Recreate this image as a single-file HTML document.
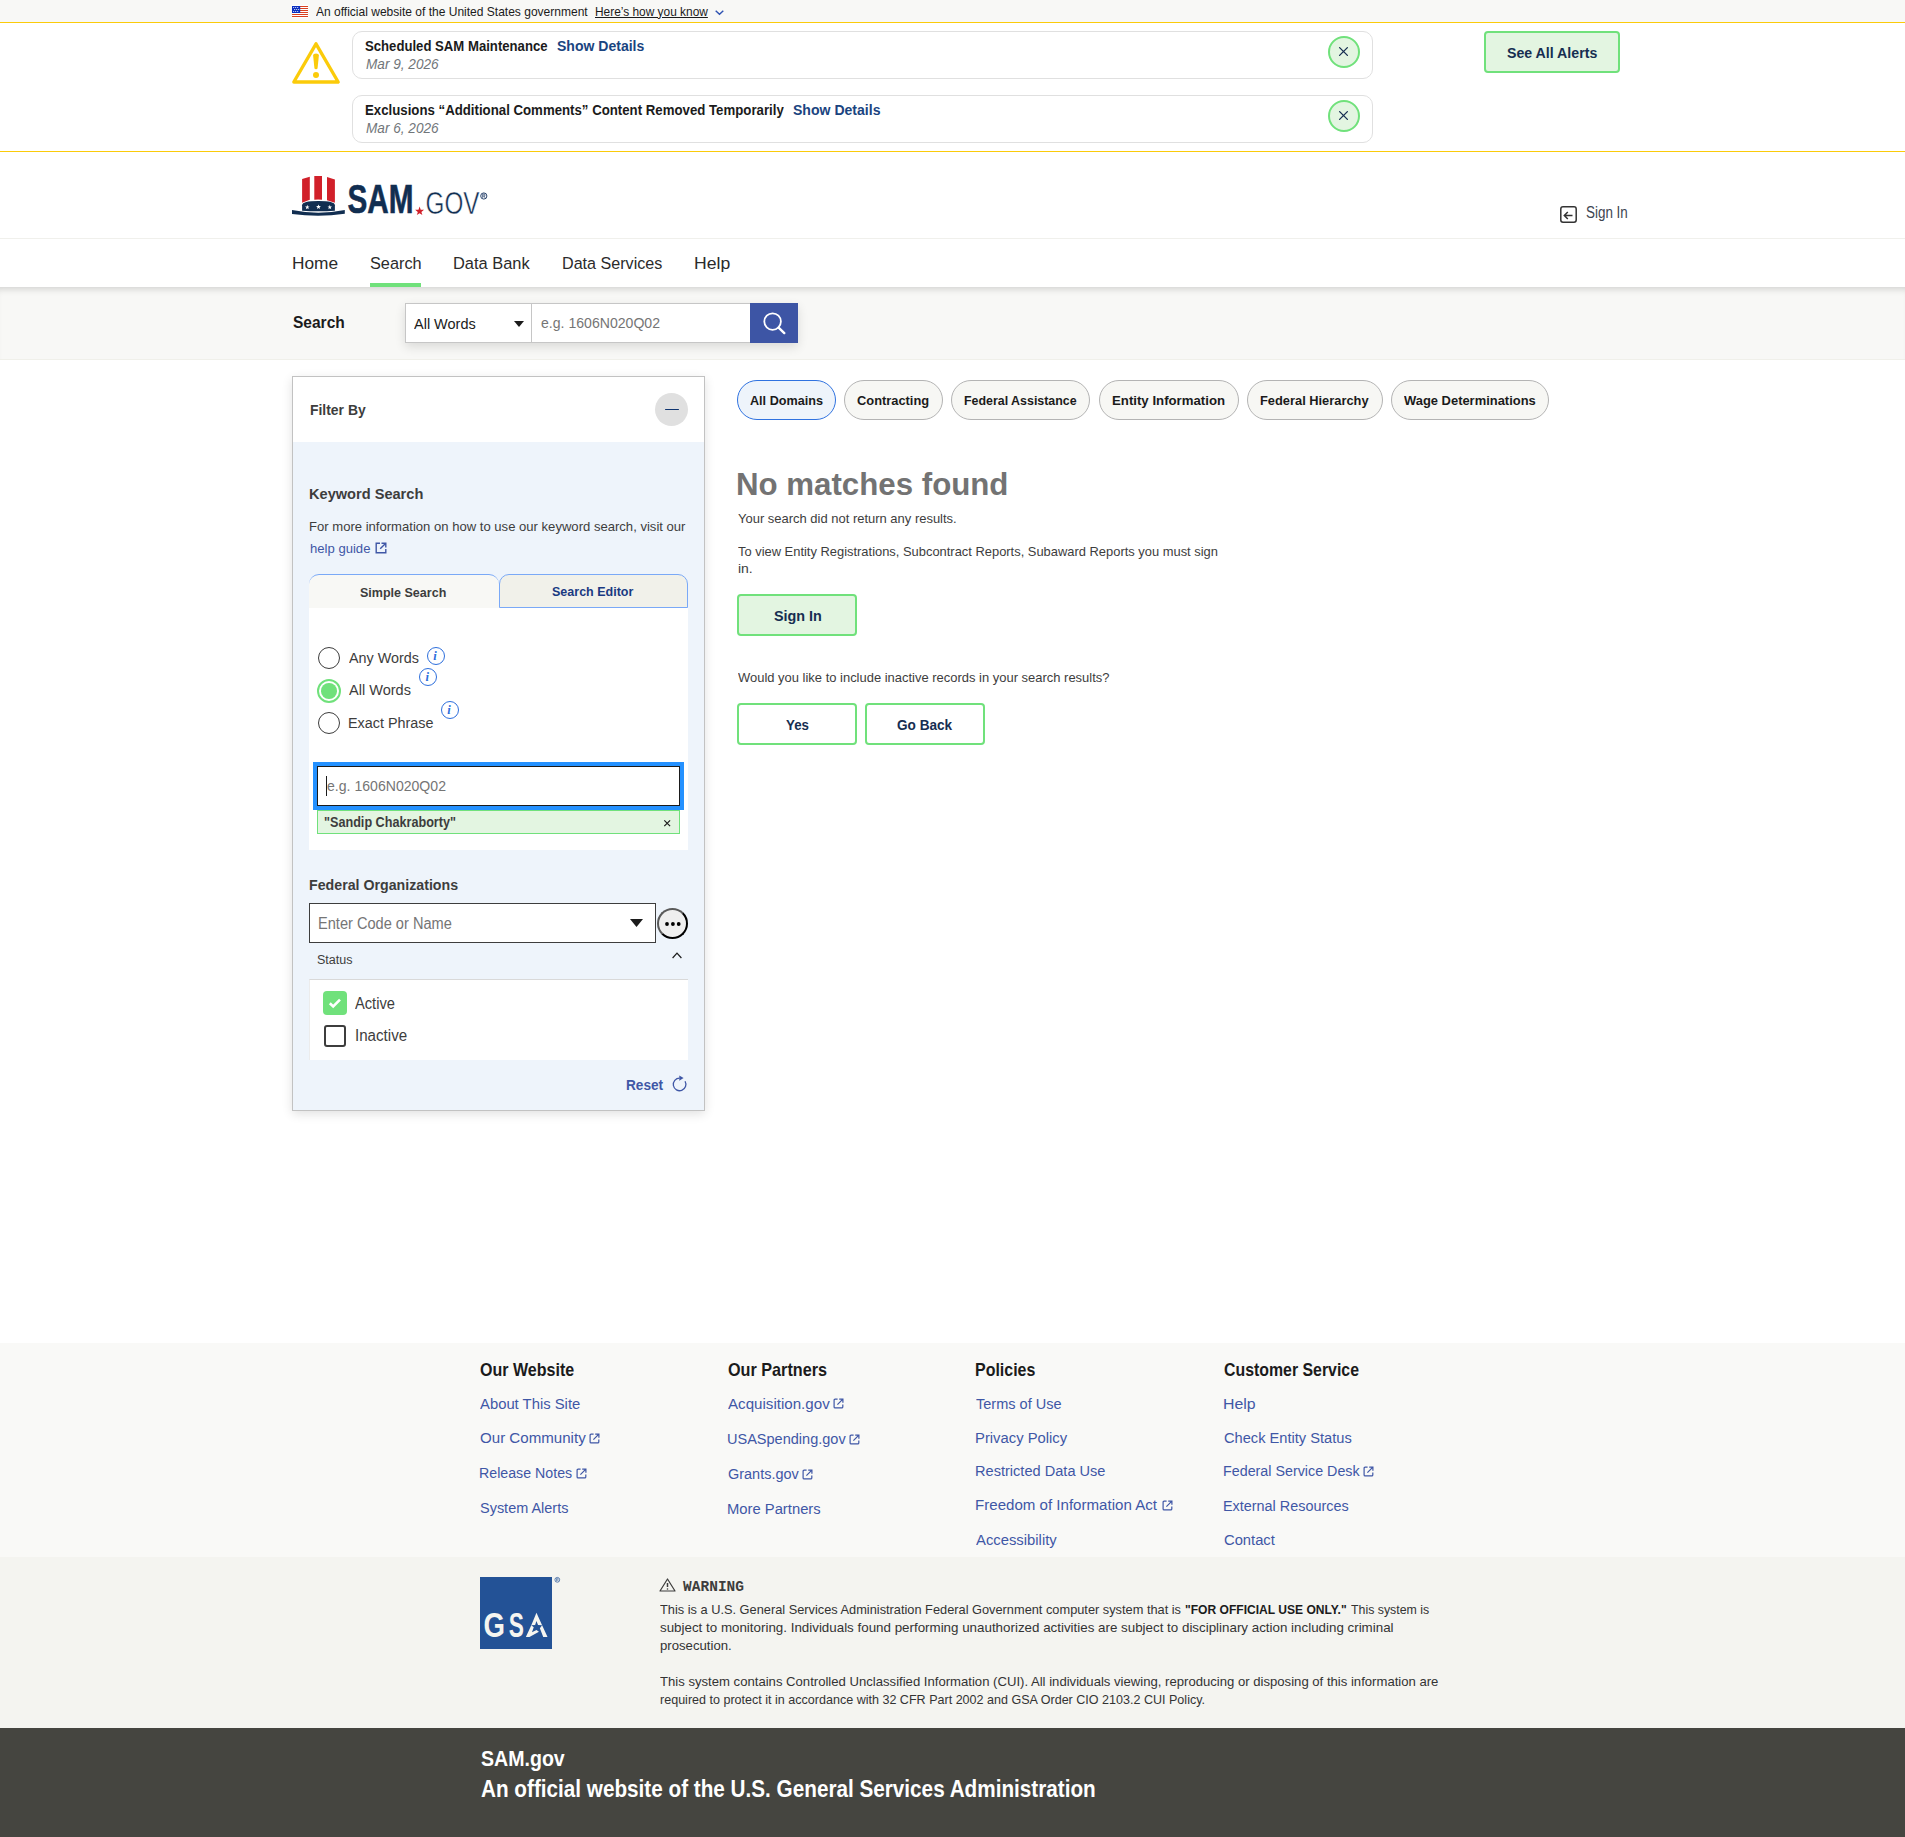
<!DOCTYPE html><html lang="en"><head><meta charset="utf-8"><title>SAM.gov | Search</title>
<style>
html,body{margin:0;padding:0;overflow:hidden;}
body{width:1905px;height:1837px;position:relative;overflow:hidden;background:#fff;font-family:"Liberation Sans",sans-serif;color:#1b1b1b;}
.a{position:absolute;box-sizing:border-box;}
.t{position:absolute;white-space:nowrap;transform-origin:0 0;}
.u{text-decoration:underline;}
svg{position:absolute;overflow:visible;}
</style></head><body>
<div class="a" style="left:0;top:0;width:1905px;height:22px;background:#f8f8f6"></div><div class="a" style="left:0;top:22px;width:1905px;height:1px;background:#fbcb0a"></div><svg style="left:292px;top:5px" width="16" height="13" viewBox="0 0 16 13">
<rect width="16" height="13" fill="#fff"/>
<g fill="#d9401f"><rect y="1" width="16" height="1"/><rect y="3" width="16" height="1"/><rect y="5" width="16" height="1"/><rect y="7" width="16" height="1"/><rect y="9" width="16" height="1"/><rect y="11" width="16" height="1"/></g>
<rect y="1" width="8.2" height="7" fill="#0a2fc0"/>
<g fill="#fff"><circle cx="1.7" cy="2.5" r=".55"/><circle cx="3.7" cy="2.5" r=".55"/><circle cx="5.7" cy="2.5" r=".55"/><circle cx="2.7" cy="4.5" r=".55"/><circle cx="4.7" cy="4.5" r=".55"/><circle cx="6.7" cy="4.5" r=".55"/><circle cx="1.7" cy="6.5" r=".55"/><circle cx="3.7" cy="6.5" r=".55"/><circle cx="5.7" cy="6.5" r=".55"/></g>
</svg><div class="t" style="left:316.00px;top:4.60px;font-size:13px;line-height:13px;color:#1b1b1b;transform:scaleX(0.9244);">An official website of the United States government</div><div class="t" style="left:595.48px;top:4.60px;font-size:13px;line-height:13px;color:#1b1b1b;transform:scaleX(0.9151);text-decoration:underline;">Here&#8217;s how you know</div><svg style="left:715px;top:10px" width="9" height="5" viewBox="0 0 9 5"><path d="M0.7 0.7 L4.5 4.2 L8.3 0.7" fill="none" stroke="#2e52b2" stroke-width="1.4"/></svg><div class="a" style="left:0;top:151px;width:1905px;height:1px;background:#fbcb0a"></div><svg style="left:292px;top:42px" width="48" height="42" viewBox="0 0 48 42">
<path d="M24 1.8 L46.2 40 L1.8 40 Z" fill="none" stroke="#fbcb0a" stroke-width="3.3" stroke-linejoin="round"/>
<path d="M21.1 13.2 Q21.1 11.6 24 11.6 Q26.9 11.6 26.9 13.2 L25.6 26 Q25.4 27.2 24 27.2 Q22.6 27.2 22.4 26 Z" fill="#fbcb0a"/>
<circle cx="24" cy="32.9" r="3" fill="#fbcb0a"/>
</svg><div class="a" style="left:352px;top:31px;width:1021px;height:48px;border:1px solid #e0e0e0;border-radius:10px;background:#fff"></div><div class="t" style="left:365.00px;top:38.75px;font-size:14.5px;line-height:14.5px;font-weight:700;color:#1b1b1b;transform:scaleX(0.9063);">Scheduled SAM Maintenance</div><div class="t" style="left:556.60px;top:38.75px;font-size:14.5px;line-height:14.5px;font-weight:700;color:#1a4480;transform:scaleX(0.9670);">Show Details</div><div class="t" style="left:365.50px;top:56.75px;font-size:14.5px;line-height:14.5px;font-style:italic;color:#71767a;transform:scaleX(0.9385);">Mar 9, 2026</div><div class="a" style="left:1328px;top:36px;width:32px;height:32px;border:2px solid #70e17b;border-radius:50%;background:#e3f5e1"></div><svg style="left:1339px;top:47.4px" width="9" height="9" viewBox="0 0 9 9"><path d="M.6 .6L8.4 8.4M8.4 .6L.6 8.4" stroke="#162e51" stroke-width="1.3" stroke-linecap="round"/></svg><div class="a" style="left:352px;top:95px;width:1021px;height:48px;border:1px solid #e0e0e0;border-radius:10px;background:#fff"></div><div class="t" style="left:365.00px;top:102.75px;font-size:14.5px;line-height:14.5px;font-weight:700;color:#1b1b1b;transform:scaleX(0.9124);">Exclusions &#8220;Additional Comments&#8221; Content Removed Temporarily</div><div class="t" style="left:793.00px;top:102.75px;font-size:14.5px;line-height:14.5px;font-weight:700;color:#1a4480;transform:scaleX(0.9692);">Show Details</div><div class="t" style="left:365.50px;top:120.75px;font-size:14.5px;line-height:14.5px;font-style:italic;color:#71767a;transform:scaleX(0.9385);">Mar 6, 2026</div><div class="a" style="left:1328px;top:100px;width:32px;height:32px;border:2px solid #70e17b;border-radius:50%;background:#e3f5e1"></div><svg style="left:1339px;top:111.4px" width="9" height="9" viewBox="0 0 9 9"><path d="M.6 .6L8.4 8.4M8.4 .6L.6 8.4" stroke="#162e51" stroke-width="1.3" stroke-linecap="round"/></svg><div class="a" style="left:1484px;top:31px;width:136px;height:42px;border:2px solid #70e17b;border-radius:4px;background:#e3f5e1"></div><div class="t" style="left:1507.00px;top:45.00px;font-size:15px;line-height:15px;font-weight:700;color:#162e51;transform:scaleX(0.9443);">See All Alerts</div><svg style="left:292px;top:176px" width="196" height="41" viewBox="0 0 196 41">
<path d="M10.1 3.1 L17.8 0.7 L17.8 23.7 L10.1 26.7 Z" fill="#d1202a"/>
<path d="M22.3 0 L30 0 L30 23.7 Q26.15 23.2 22.3 23.7 Z" fill="#d1202a"/>
<path d="M35 1.0 L42.9 3.4 L42.9 26.7 L35 24.2 Z" fill="#d1202a"/>
<path d="M10.1 34.7 L10.1 29.3 Q10.1 25.1 26.5 25.1 Q42.9 25.1 42.9 29.3 L42.9 34.7 Q26.5 35.8 10.1 34.7 Z" fill="#112e51"/>
<path fill="#fff" d="M15.30 28.80L15.89 30.38L17.58 30.46L16.26 31.51L16.71 33.14L15.30 32.21L13.89 33.14L14.34 31.51L13.02 30.46L14.71 30.38ZM26.50 28.40L27.14 30.12L28.97 30.20L27.54 31.34L28.03 33.10L26.50 32.09L24.97 33.10L25.46 31.34L24.03 30.20L25.86 30.12ZM37.80 28.80L38.39 30.38L40.08 30.46L38.76 31.51L39.21 33.14L37.80 32.21L36.39 33.14L36.84 31.51L35.52 30.46L37.21 30.38Z"/>
<path d="M0 34.1 Q26.4 39.2 52.8 34.1 L52.8 37.8 Q26.4 41.5 0 37.9 Z" fill="#112e51"/>
<text x="55.5" y="37" font-family="Liberation Sans" font-weight="700" font-size="40" textLength="66" stroke="#112e51" stroke-width="0.6" lengthAdjust="spacingAndGlyphs" fill="#112e51">SAM</text>
<path d="M127.60 30.60L128.71 33.78L132.07 33.85L129.39 35.88L130.36 39.10L127.60 37.18L124.84 39.10L125.81 35.88L123.13 33.85L126.49 33.78Z" fill="#d1202a"/>
<text x="133.5" y="37.6" font-family="Liberation Sans" font-weight="400" font-size="31" textLength="54" lengthAdjust="spacingAndGlyphs" fill="#112e51" stroke="#fff" stroke-width="0.5" paint-order="normal">GOV</text>
<circle cx="191.8" cy="20" r="3.1" fill="none" stroke="#15325e" stroke-width=".9"/>
<path d="M190.7 21.9V18.1H192Q193.1 18.1 193.1 19.1Q193.1 20 192 20H190.7M192 20L193.1 21.9" fill="none" stroke="#15325e" stroke-width=".7"/>
</svg><svg style="left:1560px;top:206px" width="17" height="17" viewBox="0 0 17 17"><rect x="0.8" y="0.8" width="15.4" height="15.4" rx="2.2" fill="none" stroke="#333" stroke-width="1.5"/><path d="M12.5 9.5H4.5M7.8 6L4.3 9.5L7.8 13" fill="none" stroke="#333" stroke-width="1.5"/></svg><div class="t" style="left:1586.00px;top:204.50px;font-size:16px;line-height:16px;color:#3d4551;transform:scaleX(0.8382);">Sign In</div><div class="a" style="left:0;top:238px;width:1905px;height:1px;background:#f0f0ec"></div><div class="t" style="left:291.60px;top:254.90px;font-size:17.4px;line-height:17.4px;color:#2b2b2b;transform:scaleX(0.9951);">Home</div><div class="t" style="left:370.00px;top:254.90px;font-size:17.4px;line-height:17.4px;color:#2b2b2b;transform:scaleX(0.9370);">Search</div><div class="t" style="left:452.56px;top:254.90px;font-size:17.4px;line-height:17.4px;color:#2b2b2b;transform:scaleX(0.9440);">Data Bank</div><div class="t" style="left:561.97px;top:254.90px;font-size:17.4px;line-height:17.4px;color:#2b2b2b;transform:scaleX(0.9270);">Data Services</div><div class="t" style="left:694.49px;top:254.90px;font-size:17.4px;line-height:17.4px;color:#2b2b2b;transform:scaleX(1.0119);">Help</div><div class="a" style="left:370px;top:283px;width:51px;height:4px;background:#70e17b"></div><div class="a" style="left:0;top:287px;width:1905px;height:73px;background:#f8f8f6;border-bottom:1px solid #f0f0ea;box-shadow:inset 0 7px 7px -5px rgba(0,0,0,0.16)"></div><div class="t" style="left:292.60px;top:314.85px;font-size:16.7px;line-height:16.7px;font-weight:700;color:#1b1b1b;transform:scaleX(0.9303);">Search</div><div class="a" style="left:405px;top:303px;width:393px;height:40px;box-shadow:0 4px 10px rgba(0,0,0,0.12)"></div><div class="a" style="left:405px;top:303px;width:127px;height:40px;border:1px solid #c6c6c6;background:#fff"></div><div class="t" style="left:414.30px;top:315.60px;font-size:15.4px;line-height:15.4px;color:#1b1b1b;transform:scaleX(0.9412);">All Words</div><svg style="left:514px;top:321px" width="10" height="6" viewBox="0 0 10 6"><path d="M0 0H10L5 6Z" fill="#1b1b1b"/></svg><div class="a" style="left:532px;top:303px;width:219px;height:40px;border:1px solid #c6c6c6;border-left:none;background:#fff"></div><div class="t" style="left:540.60px;top:315.40px;font-size:15.4px;line-height:15.4px;color:#757575;transform:scaleX(0.9150);">e.g. 1606N020Q02</div><div class="a" style="left:750px;top:303px;width:48px;height:40px;background:#3d55a5"></div><svg style="left:762px;top:311px" width="24" height="24" viewBox="0 0 24 24"><circle cx="10.6" cy="10.6" r="8.3" fill="none" stroke="#fff" stroke-width="1.8"/><path d="M16.6 16.6L22.3 22.1" stroke="#fff" stroke-width="2.4" stroke-linecap="round"/></svg><div class="a" style="left:292px;top:376px;width:413px;height:735px;border:1px solid #c2c2c2;background:#fff;box-shadow:0 3px 10px rgba(0,0,0,0.12)"></div><div class="a" style="left:293px;top:442px;width:411px;height:668px;background:#eef4fb"></div><div class="t" style="left:309.70px;top:403.45px;font-size:14.5px;line-height:14.5px;font-weight:700;color:#3d3d3d;transform:scaleX(0.9594);">Filter By</div><div class="a" style="left:655px;top:393px;width:33px;height:33px;border-radius:50%;background:#e0e0e0"></div><div class="a" style="left:665px;top:408.7px;width:14px;height:1.4px;border-radius:1px;background:#0f3570"></div><div class="t" style="left:308.55px;top:485.50px;font-size:15.4px;line-height:15.4px;font-weight:700;color:#3d3d3d;transform:scaleX(0.9479);">Keyword Search</div><div class="t" style="left:308.52px;top:520.20px;font-size:13.4px;line-height:13.4px;color:#3d3d3d;transform:scaleX(0.9765);">For more information on how to use our keyword search, visit our</div><div class="t" style="left:309.50px;top:542.10px;font-size:13.4px;line-height:13.4px;color:#3f57a6;transform:scaleX(0.9779);">help guide</div><svg style="left:375px;top:542px" width="12" height="12" viewBox="0 0 12 12"><path d="M5 1.2H1.2V10.8H10.8V7" fill="none" stroke="#3f57a6" stroke-width="1.4"/><path d="M6.5 1.2H10.8V5.5M10.8 1.2L5.2 6.8" fill="none" stroke="#3f57a6" stroke-width="1.4"/></svg><div class="a" style="left:309px;top:608px;width:379px;height:242px;background:#fff"></div><div class="a" style="left:309px;top:574px;width:190px;height:34px;background:#f8f8f5;border-top:1px solid #7aa9f7;border-radius:10px 10px 0 0"></div><div class="a" style="left:499px;top:574px;width:189px;height:34px;background:#f1f1ea;border:1px solid #7aa9f7;border-radius:10px 10px 0 0"></div><div class="t" style="left:360.30px;top:585.70px;font-size:13.6px;line-height:13.6px;font-weight:700;color:#3d3d3d;transform:scaleX(0.9209);">Simple Search</div><div class="t" style="left:552.00px;top:584.70px;font-size:13.6px;line-height:13.6px;font-weight:700;color:#1a3a82;transform:scaleX(0.9204);">Search Editor</div><div class="a" style="left:318px;top:647px;width:22px;height:22px;border-radius:50%;border:1.5px solid #3d3d3d;background:#fff"></div><div class="t" style="left:349.20px;top:649.60px;font-size:15.4px;line-height:15.4px;color:#3d3d3d;transform:scaleX(0.9324);">Any Words</div><div class="a" style="left:427px;top:647px;width:18px;height:18px;border-radius:50%;border:1.3px solid #2e6fdc"></div><div class="t" style="left:433.2px;top:649px;font-size:12.5px;line-height:14px;font-style:italic;font-weight:700;font-family:'Liberation Serif',serif;color:#2e6fdc">i</div><div class="a" style="left:317px;top:679px;width:24px;height:24px;border-radius:50%;border:2.2px solid #70e17b;background:#fff"></div><div class="a" style="left:321.2px;top:683.2px;width:15.6px;height:15.6px;border-radius:50%;background:#70e17b"></div><div class="t" style="left:349.20px;top:682.40px;font-size:15.4px;line-height:15.4px;color:#3d3d3d;transform:scaleX(0.9442);">All Words</div><div class="a" style="left:419.2px;top:668px;width:18px;height:18px;border-radius:50%;border:1.3px solid #2e6fdc"></div><div class="t" style="left:425.4px;top:670px;font-size:12.5px;line-height:14px;font-style:italic;font-weight:700;font-family:'Liberation Serif',serif;color:#2e6fdc">i</div><div class="a" style="left:318px;top:711.6px;width:22px;height:22px;border-radius:50%;border:1.5px solid #3d3d3d;background:#fff"></div><div class="t" style="left:348.27px;top:715.40px;font-size:15.4px;line-height:15.4px;color:#3d3d3d;transform:scaleX(0.9336);">Exact Phrase</div><div class="a" style="left:441px;top:701px;width:18px;height:18px;border-radius:50%;border:1.3px solid #2e6fdc"></div><div class="t" style="left:447.2px;top:703px;font-size:12.5px;line-height:14px;font-style:italic;font-weight:700;font-family:'Liberation Serif',serif;color:#2e6fdc">i</div><div class="a" style="left:313px;top:762px;width:371px;height:48px;border:4px solid #2491ff;"></div><div class="a" style="left:317px;top:766px;width:363px;height:40px;border:1px solid #1b1b1b;background:#fff"></div><div class="a" style="left:326px;top:776px;width:1.3px;height:20px;background:#1b1b1b"></div><div class="t" style="left:327.00px;top:778.35px;font-size:15.3px;line-height:15.3px;color:#757575;transform:scaleX(0.9203);">e.g. 1606N020Q02</div><div class="a" style="left:317px;top:810px;width:363px;height:24px;border:1px solid #70e17b;background:#e3f5e1"></div><div class="t" style="left:324.00px;top:815.60px;font-size:13.8px;line-height:13.8px;font-weight:700;color:#3d3d3d;transform:scaleX(0.9155);">&quot;Sandip Chakraborty&quot;</div><svg style="left:663.8px;top:819.7px" width="6.4" height="6.4" viewBox="0 0 6.4 6.4"><path d="M.3 .3L6.1 6.1M6.1 .3L.3 6.1" stroke="#1b1b1b" stroke-width="1.2"/></svg><div class="t" style="left:309.40px;top:877.75px;font-size:14.5px;line-height:14.5px;font-weight:700;color:#3d3d3d;transform:scaleX(0.9788);">Federal Organizations</div><div class="a" style="left:309px;top:903px;width:347px;height:40px;border:1px solid #3d3d3d;background:#fff"></div><div class="t" style="left:317.59px;top:915.90px;font-size:16px;line-height:16px;color:#757575;transform:scaleX(0.9120);">Enter Code or Name</div><svg style="left:629.5px;top:919px" width="13" height="8" viewBox="0 0 13 8"><path d="M0 0H13L6.5 8Z" fill="#1b1b1b"/></svg><div class="a" style="left:656.5px;top:907.5px;width:31px;height:31px;border-radius:50%;border:2px solid;border-color:#5a5a5a #000 #000 #5a5a5a;background:#efefef"></div><svg style="left:665.4px;top:922.3px" width="16" height="4" viewBox="0 0 16 4"><circle cx="2" cy="2" r="1.9" fill="#000"/><circle cx="7.9" cy="2" r="1.9" fill="#000"/><circle cx="13.7" cy="2" r="1.9" fill="#000"/></svg><div class="t" style="left:317.40px;top:952.65px;font-size:13.7px;line-height:13.7px;color:#3d3d3d;transform:scaleX(0.9163);">Status</div><svg style="left:671.5px;top:952px" width="10" height="7" viewBox="0 0 10 7"><path d="M.6 6L5 1.2L9.4 6" fill="none" stroke="#1b1b1b" stroke-width="1.2"/></svg><div class="a" style="left:309px;top:979px;width:379px;height:81px;background:#fff;border-top:1.5px solid #d9d9d9;border-left:1px solid #ececec"></div><div class="a" style="left:323px;top:991px;width:24px;height:24px;border-radius:4px;background:#70e17b"></div><svg style="left:328px;top:997px" width="14" height="12" viewBox="0 0 14 12"><path d="M1.8 6.2L5.2 9.4L12 2.6" fill="none" stroke="#fff" stroke-width="2.6"/></svg><div class="t" style="left:355.10px;top:995.50px;font-size:16px;line-height:16px;color:#3d3d3d;transform:scaleX(0.9159);">Active</div><div class="a" style="left:324px;top:1025px;width:22px;height:22px;border-radius:3px;border:2px solid #3d3d3d;background:#fff"></div><div class="t" style="left:354.75px;top:1027.80px;font-size:16px;line-height:16px;color:#3d3d3d;transform:scaleX(0.9458);">Inactive</div><div class="t" style="left:625.50px;top:1078.45px;font-size:14.5px;line-height:14.5px;font-weight:700;color:#3f57a6;transform:scaleX(0.9404);">Reset</div><svg style="left:672px;top:1076px" width="16" height="16" viewBox="0 0 16 16"><path d="M13.06 5.25A6.3 6.3 0 1 1 7.6 2.1" fill="none" stroke="#3f57a6" stroke-width="1.3"/><path d="M7.3 -0.6L11.6 2.1L7.3 4.8Z" fill="#3f57a6"/></svg><div class="a" style="left:737px;top:380px;width:99px;height:40px;border:1.5px solid #2f72e0;border-radius:20px;background:#eef4fb"></div><div class="t" style="left:750.20px;top:393.70px;font-size:13.2px;line-height:13.2px;font-weight:700;color:#1b1b1b;transform:scaleX(0.9569);">All Domains</div><div class="a" style="left:844px;top:380px;width:98.5px;height:40px;border:1px solid #b4b4b4;border-radius:20px;background:#f7f7f4"></div><div class="t" style="left:857.20px;top:393.70px;font-size:13.2px;line-height:13.2px;font-weight:700;color:#1b1b1b;transform:scaleX(0.9751);">Contracting</div><div class="a" style="left:951.2px;top:380px;width:139.20000000000005px;height:40px;border:1px solid #b4b4b4;border-radius:20px;background:#f7f7f4"></div><div class="t" style="left:964.40px;top:393.70px;font-size:13.2px;line-height:13.2px;font-weight:700;color:#1b1b1b;transform:scaleX(0.9409);">Federal Assistance</div><div class="a" style="left:1099.2px;top:380px;width:139.39999999999986px;height:40px;border:1px solid #b4b4b4;border-radius:20px;background:#f7f7f4"></div><div class="t" style="left:1112.40px;top:393.70px;font-size:13.2px;line-height:13.2px;font-weight:700;color:#1b1b1b;transform:scaleX(1.0021);">Entity Information</div><div class="a" style="left:1247px;top:380px;width:135.5999999999999px;height:40px;border:1px solid #b4b4b4;border-radius:20px;background:#f7f7f4"></div><div class="t" style="left:1260.20px;top:393.70px;font-size:13.2px;line-height:13.2px;font-weight:700;color:#1b1b1b;transform:scaleX(0.9743);">Federal Hierarchy</div><div class="a" style="left:1391px;top:380px;width:157.79999999999995px;height:40px;border:1px solid #b4b4b4;border-radius:20px;background:#f7f7f4"></div><div class="t" style="left:1404.20px;top:393.70px;font-size:13.2px;line-height:13.2px;font-weight:700;color:#1b1b1b;transform:scaleX(0.9805);">Wage Determinations</div><div class="t" style="left:736.05px;top:467.70px;font-size:32px;line-height:32px;font-weight:700;color:#737373;transform:scaleX(0.9761);">No matches found</div><div class="t" style="left:737.50px;top:512.30px;font-size:13.4px;line-height:13.4px;color:#3d3d3d;transform:scaleX(0.9686);">Your search did not return any results.</div><div class="t" style="left:737.50px;top:544.60px;font-size:13.4px;line-height:13.4px;color:#3d3d3d;transform:scaleX(0.9639);">To view Entity Registrations, Subcontract Reports, Subaward Reports you must sign</div><div class="t" style="left:737.50px;top:562.20px;font-size:13.4px;line-height:13.4px;color:#3d3d3d;transform:scaleX(1.0430);">in.</div><div class="a" style="left:737px;top:594px;width:120px;height:42px;border:2px solid #70e17b;border-radius:4px;background:#e3f5e1"></div><div class="t" style="left:773.50px;top:608.30px;font-size:15.4px;line-height:15.4px;font-weight:700;color:#162e51;transform:scaleX(0.9333);">Sign In</div><div class="t" style="left:737.50px;top:670.60px;font-size:13.4px;line-height:13.4px;color:#3d3d3d;transform:scaleX(0.9678);">Would you like to include inactive records in your search results?</div><div class="a" style="left:737px;top:703px;width:120px;height:42px;border:2px solid #70e17b;border-radius:4px;background:#fff"></div><div class="t" style="left:786.00px;top:717.30px;font-size:15.4px;line-height:15.4px;font-weight:700;color:#162e51;transform:scaleX(0.8662);">Yes</div><div class="a" style="left:865px;top:703px;width:120px;height:42px;border:2px solid #70e17b;border-radius:4px;background:#fff"></div><div class="t" style="left:897.00px;top:717.30px;font-size:15.4px;line-height:15.4px;font-weight:700;color:#162e51;transform:scaleX(0.8826);">Go Back</div><div class="a" style="left:0;top:1343px;width:1905px;height:214px;background:#f9f9f7"></div><div class="a" style="left:0;top:1557px;width:1905px;height:171px;background:#f4f4f0"></div><div class="a" style="left:0;top:1728px;width:1905px;height:109px;background:#454540"></div><div class="t" style="left:479.80px;top:1359.90px;font-size:19px;line-height:19px;font-weight:700;color:#1b1b1b;transform:scaleX(0.8442);">Our Website</div><div class="t" style="left:479.80px;top:1395.50px;font-size:15.4px;line-height:15.4px;color:#3f57a6;transform:scaleX(0.9633);">About This Site</div><div class="t" style="left:479.80px;top:1430.20px;font-size:15.4px;line-height:15.4px;color:#3f57a6;transform:scaleX(0.9809);">Our Community</div><svg style="left:589.3px;top:1432.9px" width="11" height="11" viewBox="0 0 11 11"><path d="M4.6 1.2H2.1Q1.1 1.2 1.1 2.2V8.9Q1.1 9.9 2.1 9.9H8.8Q9.8 9.9 9.8 8.9V6.4" fill="none" stroke="#3f57a6" stroke-width="1.2"/><path d="M6.2 1.1H9.9V4.8M9.6 1.4L4.4 6.6" fill="none" stroke="#3f57a6" stroke-width="1.2"/></svg><div class="t" style="left:478.88px;top:1465.10px;font-size:15.4px;line-height:15.4px;color:#3f57a6;transform:scaleX(0.9227);">Release Notes</div><svg style="left:575.8px;top:1467.8px" width="11" height="11" viewBox="0 0 11 11"><path d="M4.6 1.2H2.1Q1.1 1.2 1.1 2.2V8.9Q1.1 9.9 2.1 9.9H8.8Q9.8 9.9 9.8 8.9V6.4" fill="none" stroke="#3f57a6" stroke-width="1.2"/><path d="M6.2 1.1H9.9V4.8M9.6 1.4L4.4 6.6" fill="none" stroke="#3f57a6" stroke-width="1.2"/></svg><div class="t" style="left:479.80px;top:1500.30px;font-size:15.4px;line-height:15.4px;color:#3f57a6;transform:scaleX(0.9398);">System Alerts</div><div class="t" style="left:727.50px;top:1359.90px;font-size:19px;line-height:19px;font-weight:700;color:#1b1b1b;transform:scaleX(0.8522);">Our Partners</div><div class="t" style="left:727.50px;top:1395.50px;font-size:15.4px;line-height:15.4px;color:#3f57a6;transform:scaleX(0.9824);">Acquisition.gov</div><svg style="left:833.0px;top:1398.2px" width="11" height="11" viewBox="0 0 11 11"><path d="M4.6 1.2H2.1Q1.1 1.2 1.1 2.2V8.9Q1.1 9.9 2.1 9.9H8.8Q9.8 9.9 9.8 8.9V6.4" fill="none" stroke="#3f57a6" stroke-width="1.2"/><path d="M6.2 1.1H9.9V4.8M9.6 1.4L4.4 6.6" fill="none" stroke="#3f57a6" stroke-width="1.2"/></svg><div class="t" style="left:726.56px;top:1431.00px;font-size:15.4px;line-height:15.4px;color:#3f57a6;transform:scaleX(0.9434);">USASpending.gov</div><svg style="left:849.0px;top:1433.7px" width="11" height="11" viewBox="0 0 11 11"><path d="M4.6 1.2H2.1Q1.1 1.2 1.1 2.2V8.9Q1.1 9.9 2.1 9.9H8.8Q9.8 9.9 9.8 8.9V6.4" fill="none" stroke="#3f57a6" stroke-width="1.2"/><path d="M6.2 1.1H9.9V4.8M9.6 1.4L4.4 6.6" fill="none" stroke="#3f57a6" stroke-width="1.2"/></svg><div class="t" style="left:727.50px;top:1465.80px;font-size:15.4px;line-height:15.4px;color:#3f57a6;transform:scaleX(0.9394);">Grants.gov</div><svg style="left:802.0px;top:1468.5px" width="11" height="11" viewBox="0 0 11 11"><path d="M4.6 1.2H2.1Q1.1 1.2 1.1 2.2V8.9Q1.1 9.9 2.1 9.9H8.8Q9.8 9.9 9.8 8.9V6.4" fill="none" stroke="#3f57a6" stroke-width="1.2"/><path d="M6.2 1.1H9.9V4.8M9.6 1.4L4.4 6.6" fill="none" stroke="#3f57a6" stroke-width="1.2"/></svg><div class="t" style="left:726.54px;top:1500.50px;font-size:15.4px;line-height:15.4px;color:#3f57a6;transform:scaleX(0.9606);">More Partners</div><div class="t" style="left:974.66px;top:1359.90px;font-size:19px;line-height:19px;font-weight:700;color:#1b1b1b;transform:scaleX(0.8399);">Policies</div><div class="t" style="left:975.50px;top:1395.50px;font-size:15.4px;line-height:15.4px;color:#3f57a6;transform:scaleX(0.9435);">Terms of Use</div><div class="t" style="left:974.54px;top:1430.20px;font-size:15.4px;line-height:15.4px;color:#3f57a6;transform:scaleX(0.9622);">Privacy Policy</div><div class="t" style="left:974.55px;top:1463.00px;font-size:15.4px;line-height:15.4px;color:#3f57a6;transform:scaleX(0.9475);">Restricted Data Use</div><div class="t" style="left:974.52px;top:1497.40px;font-size:15.4px;line-height:15.4px;color:#3f57a6;transform:scaleX(0.9801);">Freedom of Information Act</div><svg style="left:1161.5px;top:1500.1px" width="11" height="11" viewBox="0 0 11 11"><path d="M4.6 1.2H2.1Q1.1 1.2 1.1 2.2V8.9Q1.1 9.9 2.1 9.9H8.8Q9.8 9.9 9.8 8.9V6.4" fill="none" stroke="#3f57a6" stroke-width="1.2"/><path d="M6.2 1.1H9.9V4.8M9.6 1.4L4.4 6.6" fill="none" stroke="#3f57a6" stroke-width="1.2"/></svg><div class="t" style="left:975.50px;top:1532.00px;font-size:15.4px;line-height:15.4px;color:#3f57a6;transform:scaleX(0.9629);">Accessibility</div><div class="t" style="left:1223.60px;top:1359.90px;font-size:19px;line-height:19px;font-weight:700;color:#1b1b1b;transform:scaleX(0.8354);">Customer Service</div><div class="t" style="left:1222.57px;top:1395.50px;font-size:15.4px;line-height:15.4px;color:#3f57a6;transform:scaleX(1.0301);">Help</div><div class="t" style="left:1223.60px;top:1430.20px;font-size:15.4px;line-height:15.4px;color:#3f57a6;transform:scaleX(0.9509);">Check Entity Status</div><div class="t" style="left:1222.67px;top:1463.40px;font-size:15.4px;line-height:15.4px;color:#3f57a6;transform:scaleX(0.9288);">Federal Service Desk</div><svg style="left:1363.1px;top:1466.1px" width="11" height="11" viewBox="0 0 11 11"><path d="M4.6 1.2H2.1Q1.1 1.2 1.1 2.2V8.9Q1.1 9.9 2.1 9.9H8.8Q9.8 9.9 9.8 8.9V6.4" fill="none" stroke="#3f57a6" stroke-width="1.2"/><path d="M6.2 1.1H9.9V4.8M9.6 1.4L4.4 6.6" fill="none" stroke="#3f57a6" stroke-width="1.2"/></svg><div class="t" style="left:1222.66px;top:1497.80px;font-size:15.4px;line-height:15.4px;color:#3f57a6;transform:scaleX(0.9356);">External Resources</div><div class="t" style="left:1223.60px;top:1532.00px;font-size:15.4px;line-height:15.4px;color:#3f57a6;transform:scaleX(0.9579);">Contact</div><svg style="left:480px;top:1577px" width="82" height="72" viewBox="0 0 82 72">
<rect width="72" height="72" fill="#235296"/>
<text x="3.6" y="60" font-family="Liberation Sans" font-weight="700" font-size="35" textLength="21.5" lengthAdjust="spacingAndGlyphs" fill="#f5f5f0">G</text>
<text x="28.8" y="60" font-family="Liberation Sans" font-weight="700" font-size="35" textLength="15.2" lengthAdjust="spacingAndGlyphs" fill="#f5f5f0">S</text>
<path fill="#f5f5f0" d="M56.46 35.83L62.11 48.24L58.05 48.01L56.46 43.95L55.11 48.01L51.29 48.24Z M45.86 59.98L51.29 48.24L53.76 50.29L51.95 55.24L56.46 52.98L58.95 54.79L49.47 59.98Z M62.11 48.24L67.53 59.98L63.24 59.98L59.85 51.18Z"/>
<circle cx="77.3" cy="2.8" r="2.4" fill="none" stroke="#235296" stroke-width=".7"/>
<path d="M76.5 4.2V1.5H77.5Q78.3 1.5 78.3 2.2Q78.3 2.8 77.5 2.8H76.5M77.5 2.8L78.3 4.2" fill="none" stroke="#235296" stroke-width=".5"/>
</svg><svg style="left:659px;top:1578px" width="17" height="14" viewBox="0 0 17 14"><path d="M8.5 1L16 13H1Z" fill="none" stroke="#3d3d3d" stroke-width="1.2" stroke-linejoin="round"/><path d="M8.5 5V9" stroke="#3d3d3d" stroke-width="1.5"/><circle cx="8.5" cy="11" r=".8" fill="#3d3d3d"/></svg><div class="t" style="left:683.10px;top:1579.65px;font-size:14.5px;line-height:14.5px;font-weight:700;font-family:'Liberation Mono',monospace;color:#3d3d3d;">WARNING</div><div class="t" style="left:660.00px;top:1602.80px;font-size:13.4px;line-height:13.4px;color:#333333;transform:scaleX(0.9551);">This is a U.S. General Services Administration Federal Government computer system that is</div><div class="t" style="left:1185.00px;top:1602.80px;font-size:13.4px;line-height:13.4px;font-weight:700;color:#1b1b1b;transform:scaleX(0.9010);">&quot;FOR OFFICIAL USE ONLY.&quot;</div><div class="t" style="left:1350.50px;top:1602.80px;font-size:13.4px;line-height:13.4px;color:#333333;transform:scaleX(0.9222);">This system is</div><div class="t" style="left:660.00px;top:1620.80px;font-size:13.4px;line-height:13.4px;color:#333333;transform:scaleX(0.9975);">subject to monitoring. Individuals found performing unauthorized activities are subject to disciplinary action including criminal</div><div class="t" style="left:660.00px;top:1638.80px;font-size:13.4px;line-height:13.4px;color:#333333;transform:scaleX(0.9830);">prosecution.</div><div class="t" style="left:660.00px;top:1674.80px;font-size:13.4px;line-height:13.4px;color:#333333;transform:scaleX(0.9793);">This system contains Controlled Unclassified Information (CUI). All individuals viewing, reproducing or disposing of this information are</div><div class="t" style="left:660.00px;top:1692.80px;font-size:13.4px;line-height:13.4px;color:#333333;transform:scaleX(0.9368);">required to protect it in accordance with 32 CFR Part 2002 and GSA Order CIO 2103.2 CUI Policy.</div><div class="t" style="left:480.50px;top:1747.90px;font-size:21.8px;line-height:21.8px;font-weight:700;color:#fff;transform:scaleX(0.8978);">SAM.gov</div><div class="t" style="left:480.50px;top:1778.30px;font-size:23px;line-height:23px;font-weight:700;color:#fff;transform:scaleX(0.9001);">An official website of the U.S. General Services Administration</div></body></html>
